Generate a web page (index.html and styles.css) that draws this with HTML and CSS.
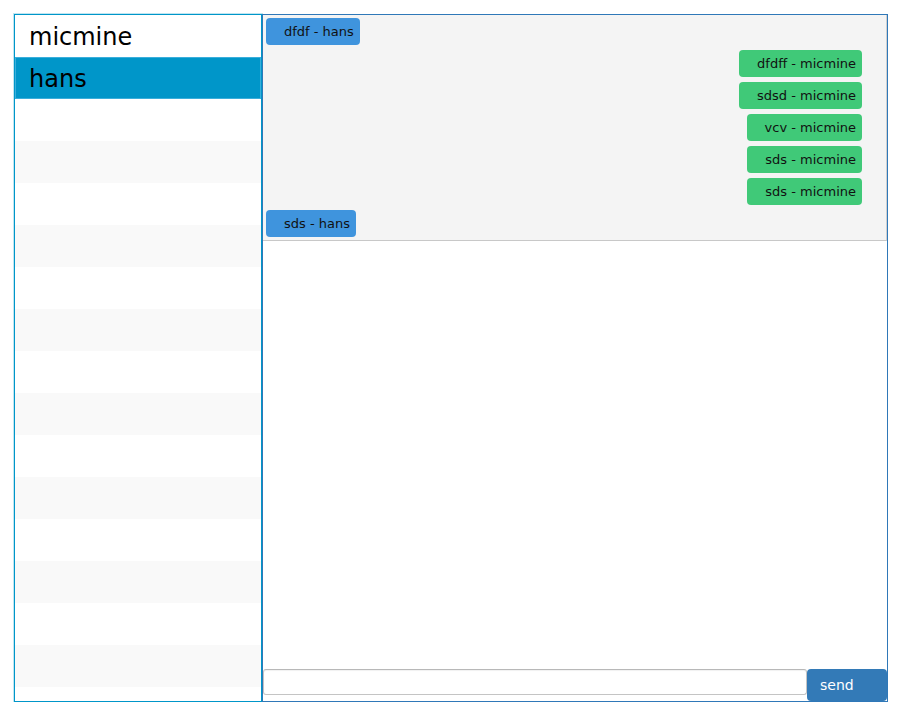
FILE: index.html
```
<!DOCTYPE html>
<html>
<head>
<meta charset="utf-8">
<link rel="stylesheet" href="styles.css">
</head>
<body>
<div class="app">
  <div class="users">
    <div class="user">micmine</div>
    <div class="user selected">hans</div>
    <div class="user"></div>
    <div class="user odd"></div>
    <div class="user"></div>
    <div class="user odd"></div>
    <div class="user"></div>
    <div class="user odd"></div>
    <div class="user"></div>
    <div class="user odd"></div>
    <div class="user"></div>
    <div class="user odd"></div>
    <div class="user"></div>
    <div class="user odd"></div>
    <div class="user"></div>
    <div class="user odd"></div>
    <div class="user"></div>
  </div>
  <div class="chat">
    <div class="messages">
      <div class="msg in"><span class="bubble blue">dfdf - hans</span></div>
      <div class="msg out"><span class="bubble green">dfdff - micmine</span></div>
      <div class="msg out"><span class="bubble green">sdsd - micmine</span></div>
      <div class="msg out"><span class="bubble green">vcv - micmine</span></div>
      <div class="msg out"><span class="bubble green">sds - micmine</span></div>
      <div class="msg out"><span class="bubble green">sds - micmine</span></div>
      <div class="msg in"><span class="bubble blue">sds - hans</span></div>
    </div>
    <div class="spacer"></div>
    <div class="composer">
      <input class="field" type="text">
      <button class="send">send</button>
    </div>
  </div>
</div>
</body>
</html>
```
FILE: styles.css
```
html, body {
  margin: 0;
  padding: 0;
  background: #ffffff;
  font-family: "DejaVu Sans", sans-serif;
}
.app {
  display: flex;
  padding: 14px 0 0 14px;
  height: 688px;
}
.users {
  width: 246px;
  height: 686px;
  border: 1px solid #0096c9;
  box-shadow: 0 0 0 1px rgba(0, 150, 201, 0.25);
  overflow: hidden;
  display: flex;
  flex-direction: column;
  flex-shrink: 0;
}
.user {
  height: 42px;
  flex-shrink: 0;
  box-sizing: border-box;
  padding: 2px 0 0 14px;
  font-size: 24px;
  line-height: 40px;
  color: #000;
  background: #fff;
}
.user.odd {
  background: #f9f9f9;
}
.user.selected {
  background: #0096c9;
  box-shadow: inset 0 0 0 1px #3aaedb;
}
.chat {
  width: 624px;
  height: 686px;
  border: 1px solid #2f78b8;
  display: flex;
  flex-direction: column;
  flex-shrink: 0;
}
.messages {
  height: 222px;
  flex-shrink: 0;
  overflow: hidden;
  background: #f4f4f4;
  border-bottom: 1px solid #c8c8c8;
  border-right: 1px solid #d0d0d0;
  padding: 3px 24px 0 3px;
  display: flex;
  flex-direction: column;
}
.msg {
  height: 32px;
  flex-shrink: 0;
  display: flex;
  align-items: flex-start;
}
.msg.out {
  justify-content: flex-end;
}
.bubble {
  height: 27px;
  line-height: 27px;
  box-sizing: border-box;
  padding: 0 6px 0 18px;
  border-radius: 4px;
  font-size: 13px;
  color: #111;
}
.bubble.blue {
  background: #3f94dd;
}
.bubble.green {
  background: #40c978;
}
.spacer {
  flex: 1;
}
.composer {
  display: flex;
  align-items: flex-start;
  height: 32px;
  flex-shrink: 0;
}
.field {
  width: 544px;
  height: 26px;
  box-sizing: border-box;
  margin: 0;
  border: 1px solid #c4c4c4;
  border-top-color: #b8b8b8;
  border-radius: 3px;
  background: #fff;
  box-shadow: inset 0 1px 1px rgba(0, 0, 0, 0.06);
  outline: none;
}
.send {
  width: 80px;
  height: 32px;
  margin: 0;
  border: none;
  border-radius: 4px;
  background: #337ab7;
  color: #fff;
  font-family: "DejaVu Sans", sans-serif;
  font-size: 14px;
  text-align: left;
  padding: 0 0 0 13px;
}
```
